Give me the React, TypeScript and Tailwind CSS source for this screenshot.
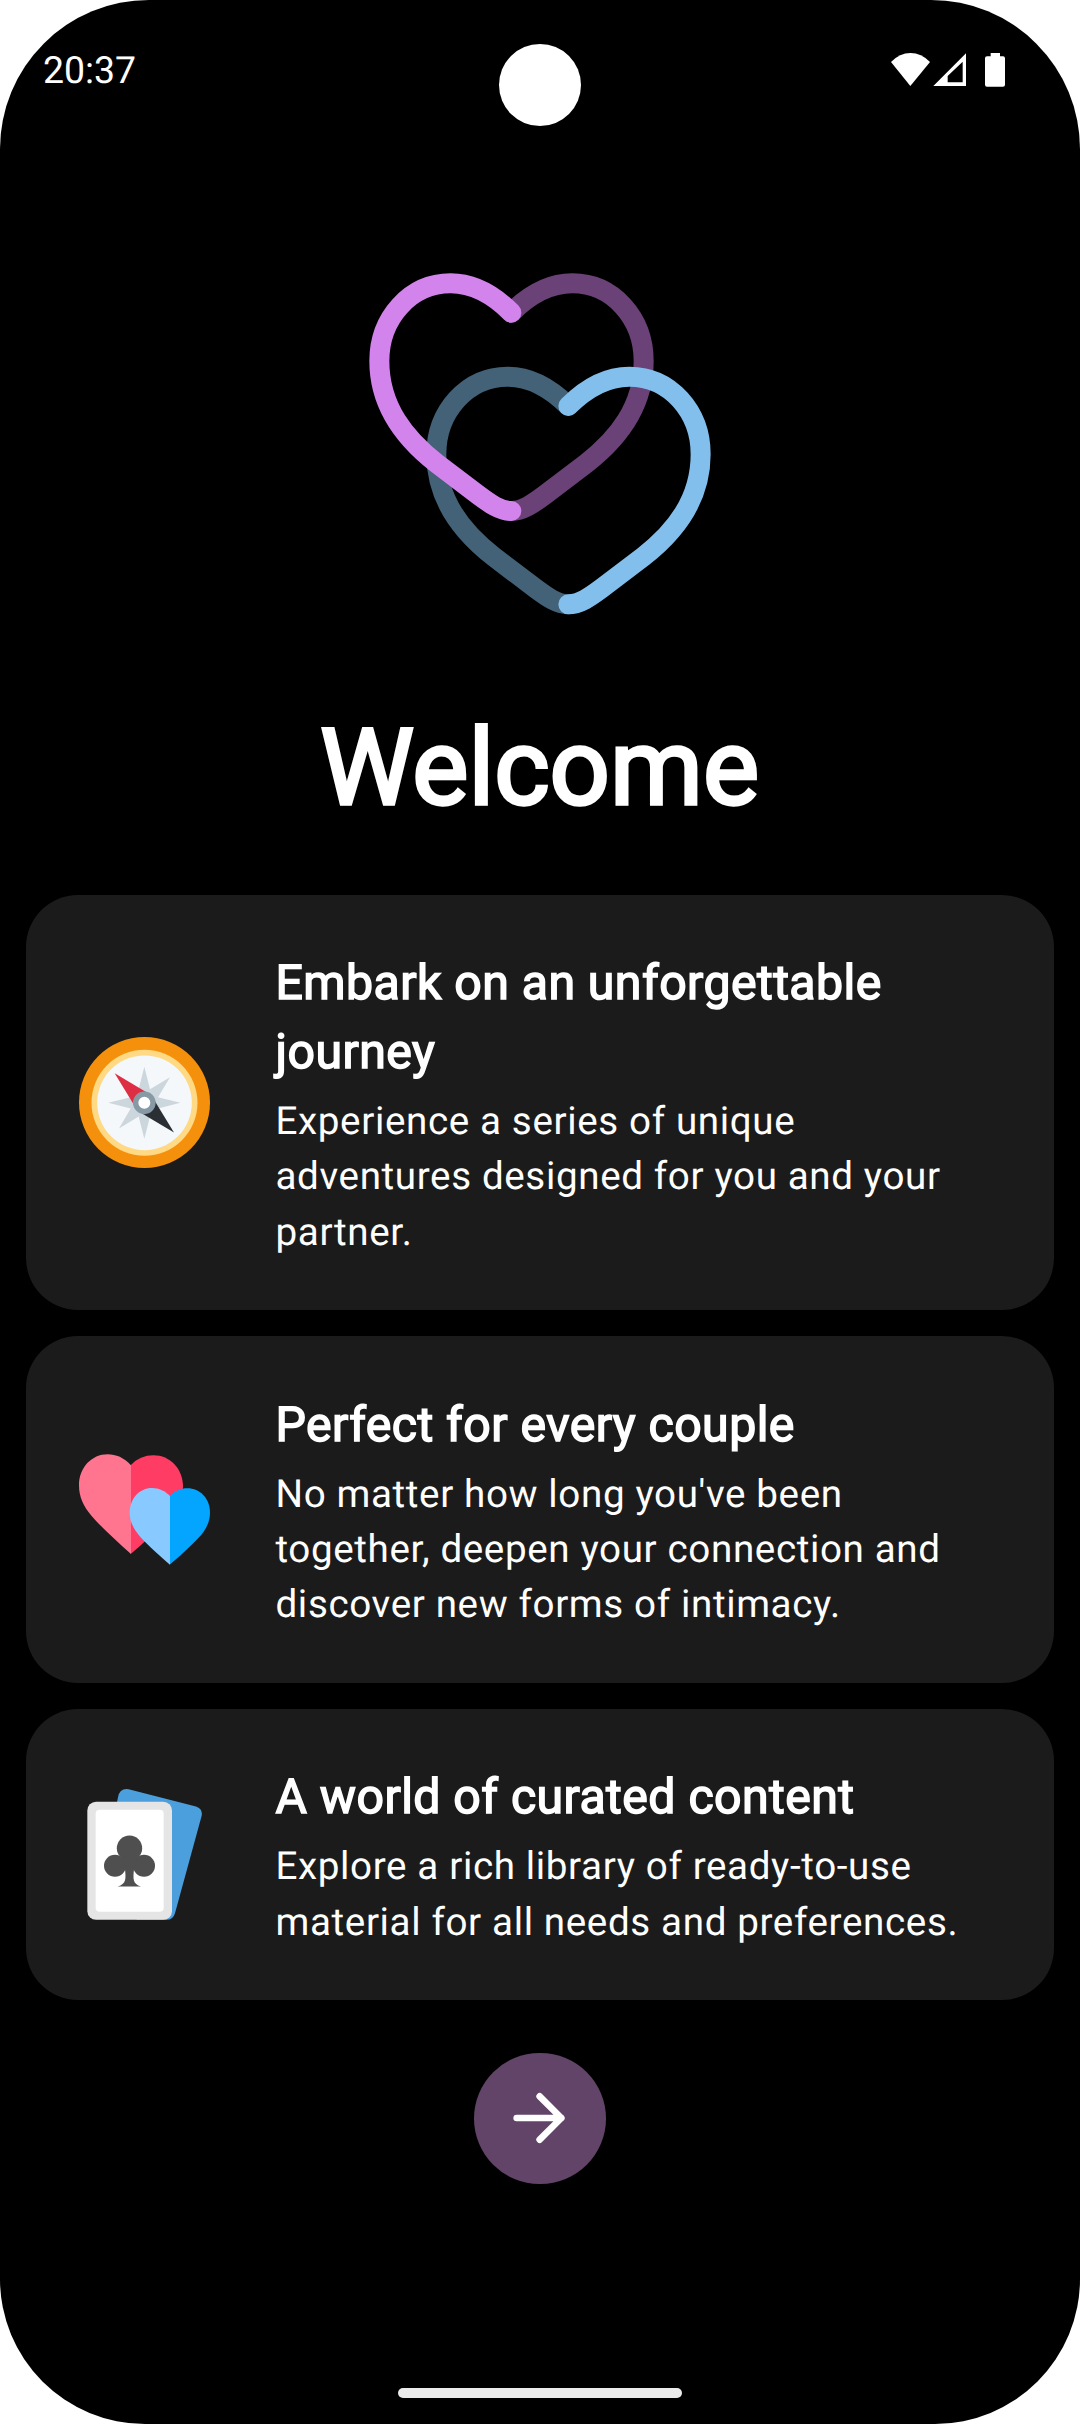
import type { ReactNode } from 'react';

function HeartsLogo() {
  const left =
    'M484 188C428 132 365 100 302 100C180 100 88 205 88 333C88 470 165 566 260 640L385 735C420 761 450 783 484 783';
  const right =
    'M484 188C540 132 603 100 667 100C789 100 881 205 881 333C881 470 804 566 709 640L584 735C549 761 518 783 484 783';
  return (
    <svg className="size-[380px]" viewBox="0 0 1140 1140" fill="none" strokeWidth="60" strokeLinecap="round">
      <path d={right} stroke="#6b4277" />
      <path d={left} stroke="#436177" transform="translate(171 280)" />
      <path d={left} stroke="#d383ec" />
      <path d={right} stroke="#83bfec" transform="translate(171 280)" />
    </svg>
  );
}

function CompassIcon() {
  return (
    <svg className="size-[131px]" viewBox="57 50.5 393 393">
      <circle cx="253.5" cy="247" r="196.5" fill="#f4900c" />
      <circle cx="253.5" cy="248" r="159" fill="#ffd983" />
      <circle cx="253.5" cy="248" r="142" fill="#f5f8fa" />
      <path
        fill="#ccd6dd"
        d="M253 140L270 207L330 171L294 231L361 248L294 265L330 325L270 289L253 356L236 289L177 325L212 265L145 248L212 231L177 171L236 207Z"
      />
      <path fill="#dd2e44" d="M164 159L262 218L223 256Z" />
      <path fill="#292f33" d="M342 337L245 279L283 240Z" />
      <circle cx="253" cy="248" r="26" fill="#fff" stroke="#8899a6" strokeWidth="16" />
    </svg>
  );
}

function CoupleIcon() {
  return (
    <svg className="size-[131px]" viewBox="57 41 393 393">
      <path fill="#ff3d64" d="M212 105C230 85 255 75 280 75C330 75 369 115 369 170C369 230 300 295 212 371Z" />
      <path fill="#ff7590" d="M213 105C192 82 168 72 143 72C95 72 57 112 57 165C57 200 70 228 95 257C125 292 170 332 213 371Z" />
      <path fill="#03a5ff" d="M329 197C345 182 362 174 382 174C420 174 450 205 450 247C450 275 437 300 415 323C393 346 360 377 329 403Z" />
      <path fill="#88c9ff" d="M330 197C316 182 297 173 276 173C238 173 209 205 209 247C209 275 222 298 243 322C265 345 300 378 330 403Z" />
    </svg>
  );
}

function CardsIcon() {
  return (
    <svg className="size-[131px]" viewBox="27 57.5 393 393">
      <path fill="#4a9fdc" d="M144 82Q149 54 176 58L378 110Q399 117 395 138L315 430Q309 450 290 450L200 450L130 150Z" />
      <rect x="52" y="96" width="254" height="354" rx="26" fill="#e5e5e5" />
      <rect x="77" y="120" width="204" height="306" rx="12" fill="#fff" />
      <g fill="#4f4f4f">
        <circle cx="178.500" cy="235" r="38" />
        <circle cx="135" cy="288" r="33" />
        <circle cx="222" cy="288" r="33" />
        <path d="M157 262H201L192 298C189 326 188 342 213 350H143C169 342 168 326 165 298Z" />
      </g>
    </svg>
  );
}

function StatusIcons() {
  return (
    <svg className="h-9 w-[120px]" viewBox="150 159 360 108" fill="#fff">
      <path d="M211 261L153 189Q179 162 211.500 162Q244 162 270 189Z" />
      <path fillRule="evenodd" d="M378 163V261H280ZM368 188L323 231V250H368Z" />
      <path d="M452 162H480V172H489Q495 172 495 178V257Q495 263 489 263H441Q435 263 435 257V178Q435 172 441 172H452Z" />
    </svg>
  );
}

function FeatureCard({ icon, title, children }: { icon: ReactNode; title: string; children: ReactNode }) {
  return (
    <section className="flex items-center gap-[65.600px] rounded-[52px] bg-[#1b1b1b] pr-[72px] pl-[52.600px]">
      <div className="shrink-0">{icon}</div>
      <div className="min-w-0 flex-1 pt-[54.400px] pb-[50.200px]">
        <h2 className="mb-[7px] text-[48.230px] leading-[68.800px] font-normal tracking-[0.440px] [-webkit-text-stroke:1.500px_white]">
          {title}
        </h2>
        <p className="text-[38.590px] leading-[55.400px] tracking-[0.630px]">{children}</p>
      </div>
    </section>
  );
}

export default function App() {
  return (
    <div className="h-[2424px] w-[1080px] bg-white">
      <div className="relative flex h-full flex-col overflow-hidden rounded-t-[149px] rounded-b-[145px] bg-black font-[Roboto,sans-serif] text-white [text-rendering:geometricPrecision]">
        <header className="flex h-[140px] items-center justify-between pr-[70px] pl-[43px]">
          <span className="mt-[3px] text-[37.400px] leading-none">20:37</span>
          <StatusIcons />
        </header>
        <div className="absolute top-[43.500px] left-[498.700px] size-[82.600px] rounded-full bg-white" />

        <div className="mt-[110px] flex h-[380px] justify-center">
          <HeartsLogo />
        </div>
        <h1 className="mt-[77px] h-[188px] pr-[1px] text-center text-[105.900px] leading-[123px] font-normal [-webkit-text-stroke:3.300px_white]">
          Welcome
        </h1>

        <main className="flex flex-col gap-[26px] px-[26.300px]">
          <FeatureCard icon={<CompassIcon />} title="Embark on an unforgettable journey">
            Experience a series of unique adventures designed for you and your partner.
          </FeatureCard>
          <FeatureCard icon={<CoupleIcon />} title="Perfect for every couple">
            No matter how long you've been together, deepen your connection and discover new forms of intimacy.
          </FeatureCard>
          <FeatureCard icon={<CardsIcon />} title="A world of curated content">
            Explore a rich library of ready-to-use material for all needs and preferences.
          </FeatureCard>
        </main>

        <button
          type="button"
          aria-label="Continue"
          className="mt-[52.500px] flex size-[131.250px] items-center justify-center self-center rounded-full bg-[#614467]"
        >
          <svg className="size-[60px]" viewBox="210 176 180 180" fill="none" stroke="#fff" strokeWidth="20" strokeLinecap="round" strokeLinejoin="round">
            <path d="M230 266H364M299 201L364 266L299 331" />
          </svg>
        </button>

        <div className="mt-auto mb-[26px] h-[10.500px] w-[284px] self-center rounded-full bg-[#ebebeb]" />
      </div>
    </div>
  );
}
